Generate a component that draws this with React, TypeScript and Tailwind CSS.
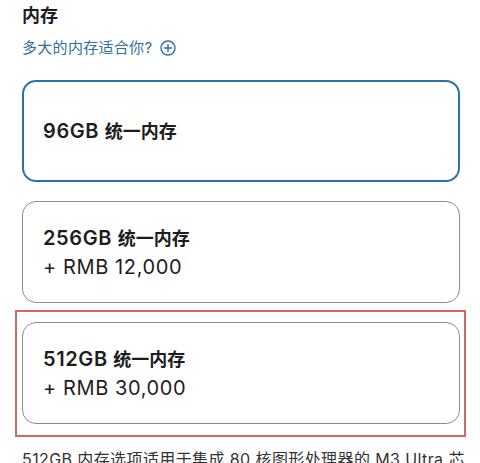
import React from "react"

interface MemoryOption {
  size: string
  price?: string
  selected?: boolean
  flagged?: boolean
}

const options: MemoryOption[] = [
  { size: "96GB", selected: true },
  { size: "256GB", price: "+ RMB 12,000" },
  { size: "512GB", price: "+ RMB 30,000", flagged: true },
]

const PlusCircle = () => (
  <svg width="16" height="16" viewBox="0 0 16 16" fill="none" className="shrink-0">
    <circle cx="8" cy="8" r="7" stroke="#2f6f9f" strokeWidth="1.4" />
    <path d="M8 4.6v6.8M4.6 8h6.8" stroke="#2f6f9f" strokeWidth="1.4" strokeLinecap="round" />
  </svg>
)

const OptionCard: React.FC<{ option: MemoryOption }> = ({ option }) => (
  <div className="relative">
    {option.flagged && (
      <div className="absolute -left-[7px] -right-[6px] -top-[12px] -bottom-[13px] border-2 border-[#d4675f] pointer-events-none" />
    )}
    <div
      className={
        option.selected
          ? "h-[102px] rounded-[14px] border-2 border-[#2b72ad] bg-white flex flex-col justify-center px-[19px]"
          : "h-[102px] rounded-[14px] border border-[#8c8c8c] bg-white flex flex-col justify-center px-[20px]"
      }
    >
      <p className="text-[20px] leading-[28px] font-semibold tracking-[0.6px] text-[#1d1d1f]">
        {option.size} <span className="text-[18px] tracking-normal">统一内存</span>
      </p>
      {option.price && (
        <p className="text-[20px] leading-[28px] tracking-[0.6px] text-[#1d1d1f]">{option.price}</p>
      )}
    </div>
  </div>
)

export default function App() {
  return (
    <div
      className="w-[480px] h-[463px] overflow-hidden bg-white pl-[22px] pr-[20px]"
      style={{ fontFamily: "Inter, 'Noto Sans CJK SC', sans-serif" }}
    >
      <h2 className="pt-[2px] text-[18px] leading-[28px] font-semibold text-[#1d1d1f]">内存</h2>
      <div className="mt-[7px] flex items-center gap-[8px] h-[22px]">
        <span className="text-[15px] leading-[22px] tracking-[0.3px] text-[#2f6f9f]">多大的内存适合你?</span>
        <PlusCircle />
      </div>

      <div className="mt-[21px] flex flex-col gap-[19px]">
        {options.map((o) => (
          <OptionCard key={o.size} option={o} />
        ))}
      </div>

      <p className="mt-[23px] -mr-[8px] text-[16px] leading-[24px] tracking-[0.4px] text-[#333]">
        512GB 内存选项适用于集成 80 核图形处理器的 M3 Ultra 芯片。
      </p>
    </div>
  )
}
